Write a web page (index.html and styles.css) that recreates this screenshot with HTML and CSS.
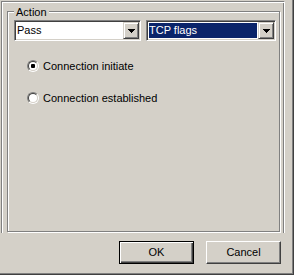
FILE: index.html
```html
<!DOCTYPE html>
<html>
<head>
<meta charset="utf-8">
<link rel="stylesheet" href="styles.css">
</head>
<body>
<div class="window">
  <div class="frame">
    <div class="group">
      <span class="legend">Action</span>
      <div class="combos">
        <div class="combo combo-pass">
          <div class="value">Pass</div>
          <div class="dd"><svg width="7" height="4" viewBox="0 0 7 4" shape-rendering="crispEdges"><rect x="0" y="0" width="7" height="1"/><rect x="1" y="1" width="5" height="1"/><rect x="2" y="2" width="3" height="1"/><rect x="3" y="3" width="1" height="1"/></svg></div>
        </div>
        <div class="combo combo-tcp">
          <div class="value selected">TCP flags</div>
          <div class="dd"><svg width="7" height="4" viewBox="0 0 7 4" shape-rendering="crispEdges"><rect x="0" y="0" width="7" height="1"/><rect x="1" y="1" width="5" height="1"/><rect x="2" y="2" width="3" height="1"/><rect x="3" y="3" width="1" height="1"/></svg></div>
        </div>
      </div>
      <div class="options">
        <div class="option"><span class="radio"><span class="ring"><span class="dot"></span></span></span><span class="label">Connection initiate</span></div>
        <div class="option"><span class="radio"><span class="ring"></span></span><span class="label">Connection established</span></div>
      </div>
    </div>
  </div>
  <div class="buttons">
    <div class="btn btn-default">OK</div>
    <div class="btn">Cancel</div>
  </div>
</div>
</body>
</html>
```
FILE: styles.css
```css
html, body {
  margin: 0;
  padding: 0;
  background: #d4d0c8;
}
body {
  font-family: "Liberation Sans", Arial, sans-serif;
  font-size: 11px;
  color: #000;
}
.window {
  width: 294px;
  height: 275px;
  box-sizing: border-box;
  display: flex;
  flex-direction: column;
  background: #d4d0c8;
  box-shadow: inset -1px -1px #404040, inset -2px -2px #808080;
}
.frame {
  margin: 1px 0 0 1px;
  width: 284px;
  height: 232px;
  box-sizing: border-box;
  border-left: 1px solid #808080;
  border-top: 1px solid #808080;
  border-right: 1px solid #fff;
  box-shadow: inset 1px 1px #fff, inset -1px 0 #808080;
  padding: 9px 0 0 5px;
}
.group {
  position: relative;
  width: 273px;
  height: 221px;
  box-sizing: border-box;
  border: 1px solid #808080;
  box-shadow: inset 1px 1px #fff, 1px 1px #fff;
  padding: 8px 0 0 6px;
}
.legend {
  position: absolute;
  left: 6px;
  top: -6px;
  padding: 0 2px;
  line-height: 13px;
  background: #d4d0c8;
}
.combos {
  display: flex;
  gap: 5px;
}
.combo {
  height: 21px;
  box-sizing: border-box;
  border: 1px solid;
  border-color: #808080 #fff #fff #808080;
  box-shadow: inset 1px 1px #404040, inset -1px -1px #d4d0c8;
  background: #fff;
  padding: 1px;
  display: flex;
}
.combo-pass { width: 127px; }
.combo-tcp { width: 130px; }
.value {
  flex: 1;
  margin: 1px;
  line-height: 15px;
  white-space: nowrap;
}
.value.selected {
  background: #0a246a;
  color: #fff;
}
.dd {
  width: 16px;
  height: 17px;
  box-sizing: border-box;
  border: 1px solid;
  border-color: #d4d0c8 #404040 #404040 #d4d0c8;
  box-shadow: inset 1px 1px #fff, inset -1px -1px #808080;
  background: #d4d0c8;
  display: flex;
  align-items: center;
  justify-content: center;
}
.dd svg {
  display: block;
  fill: #000;
}
.options {
  margin-top: 19px;
  padding-left: 13px;
  display: flex;
  flex-direction: column;
  gap: 20px;
}
.option {
  height: 12px;
  display: flex;
  align-items: center;
  line-height: 12px;
}
.radio {
  width: 12px;
  height: 12px;
  box-sizing: border-box;
  border: 1px solid;
  border-color: #808080 #fff #fff #808080;
  border-radius: 50%;
  margin-right: 4px;
  flex: none;
}
.ring {
  display: flex;
  align-items: center;
  justify-content: center;
  width: 10px;
  height: 10px;
  box-sizing: border-box;
  border: 1px solid;
  border-color: #404040 #d4d0c8 #d4d0c8 #404040;
  border-radius: 50%;
  background: #fff;
}
.dot {
  width: 4px;
  height: 4px;
  border-radius: 1px;
  background: #000;
}
.label {
  white-space: nowrap;
}
.buttons {
  display: flex;
  justify-content: flex-end;
  gap: 12px;
  padding: 8px 13px 0 0;
}
.btn {
  width: 75px;
  height: 23px;
  box-sizing: border-box;
  border: 1px solid;
  border-color: #fff #404040 #404040 #fff;
  box-shadow: inset -1px -1px #808080;
  display: flex;
  align-items: center;
  justify-content: center;
  padding-bottom: 1px;
}
.btn-default {
  border-color: #000;
  box-shadow: inset 1px 1px #fff, inset -1px -1px #404040, inset -2px -2px #808080;
}
```
